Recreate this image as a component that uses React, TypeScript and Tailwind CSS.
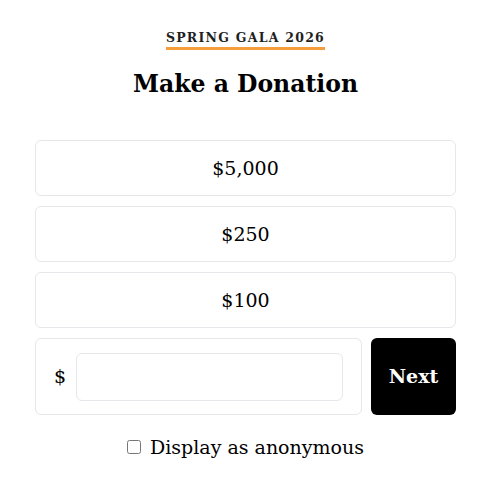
import React, { useState } from "react";

const amounts = ["$5,000", "$250", "$100"];

export default function App() {
    const [custom, setCustom] = useState("");
    const [anonymous, setAnonymous] = useState(false);

    return (
        <div className="min-h-screen bg-white text-black" style={{ fontFamily: '"DejaVu Serif", "Liberation Serif", serif' }}>
            <div className="mx-auto w-[421px] pt-[30px]">
                <div className="flex flex-col items-center">
                    <span className="border-b-[3px] border-[#f59e3b] pb-[1px] text-[12.5px] leading-[16px] font-bold tracking-[0.1em] text-[#1f1f1f]">
                        SPRING GALA 2026
                    </span>
                    <h1 className="mt-[19px] text-[23.5px] leading-[30px] font-bold">Make a Donation</h1>
                </div>

                <div className="mt-[41px] flex flex-col gap-[10px]">
                    {amounts.map((amount) => (
                        <button
                            key={amount}
                            className="h-[56px] w-full rounded-md border border-[#e5e7eb] bg-white text-[19px]"
                        >
                            {amount}
                        </button>
                    ))}

                    <div className="flex gap-[9px]">
                        <div className="flex h-[77px] flex-1 items-center gap-[10px] rounded-md border border-[#e5e7eb] pl-[18px] pr-[18px]">
                            <span className="text-[19px]">$</span>
                            <input
                                value={custom}
                                onChange={(event) => setCustom(event.target.value)}
                                className="h-[48px] flex-1 rounded-md border border-[#e5e7eb] px-3 text-[18px] outline-none"
                            />
                        </div>
                        <button className="h-[77px] w-[85px] rounded-md bg-black text-[19px] font-bold text-white">Next</button>
                    </div>
                </div>

                <label className="mt-[18px] flex items-center justify-center gap-[9px] text-[19px]">
                    <input
                        type="checkbox"
                        checked={anonymous}
                        onChange={(event) => setAnonymous(event.target.checked)}
                        className="h-[14px] w-[14px]"
                    />
                    Display as anonymous
                </label>
            </div>
        </div>
    );
}
